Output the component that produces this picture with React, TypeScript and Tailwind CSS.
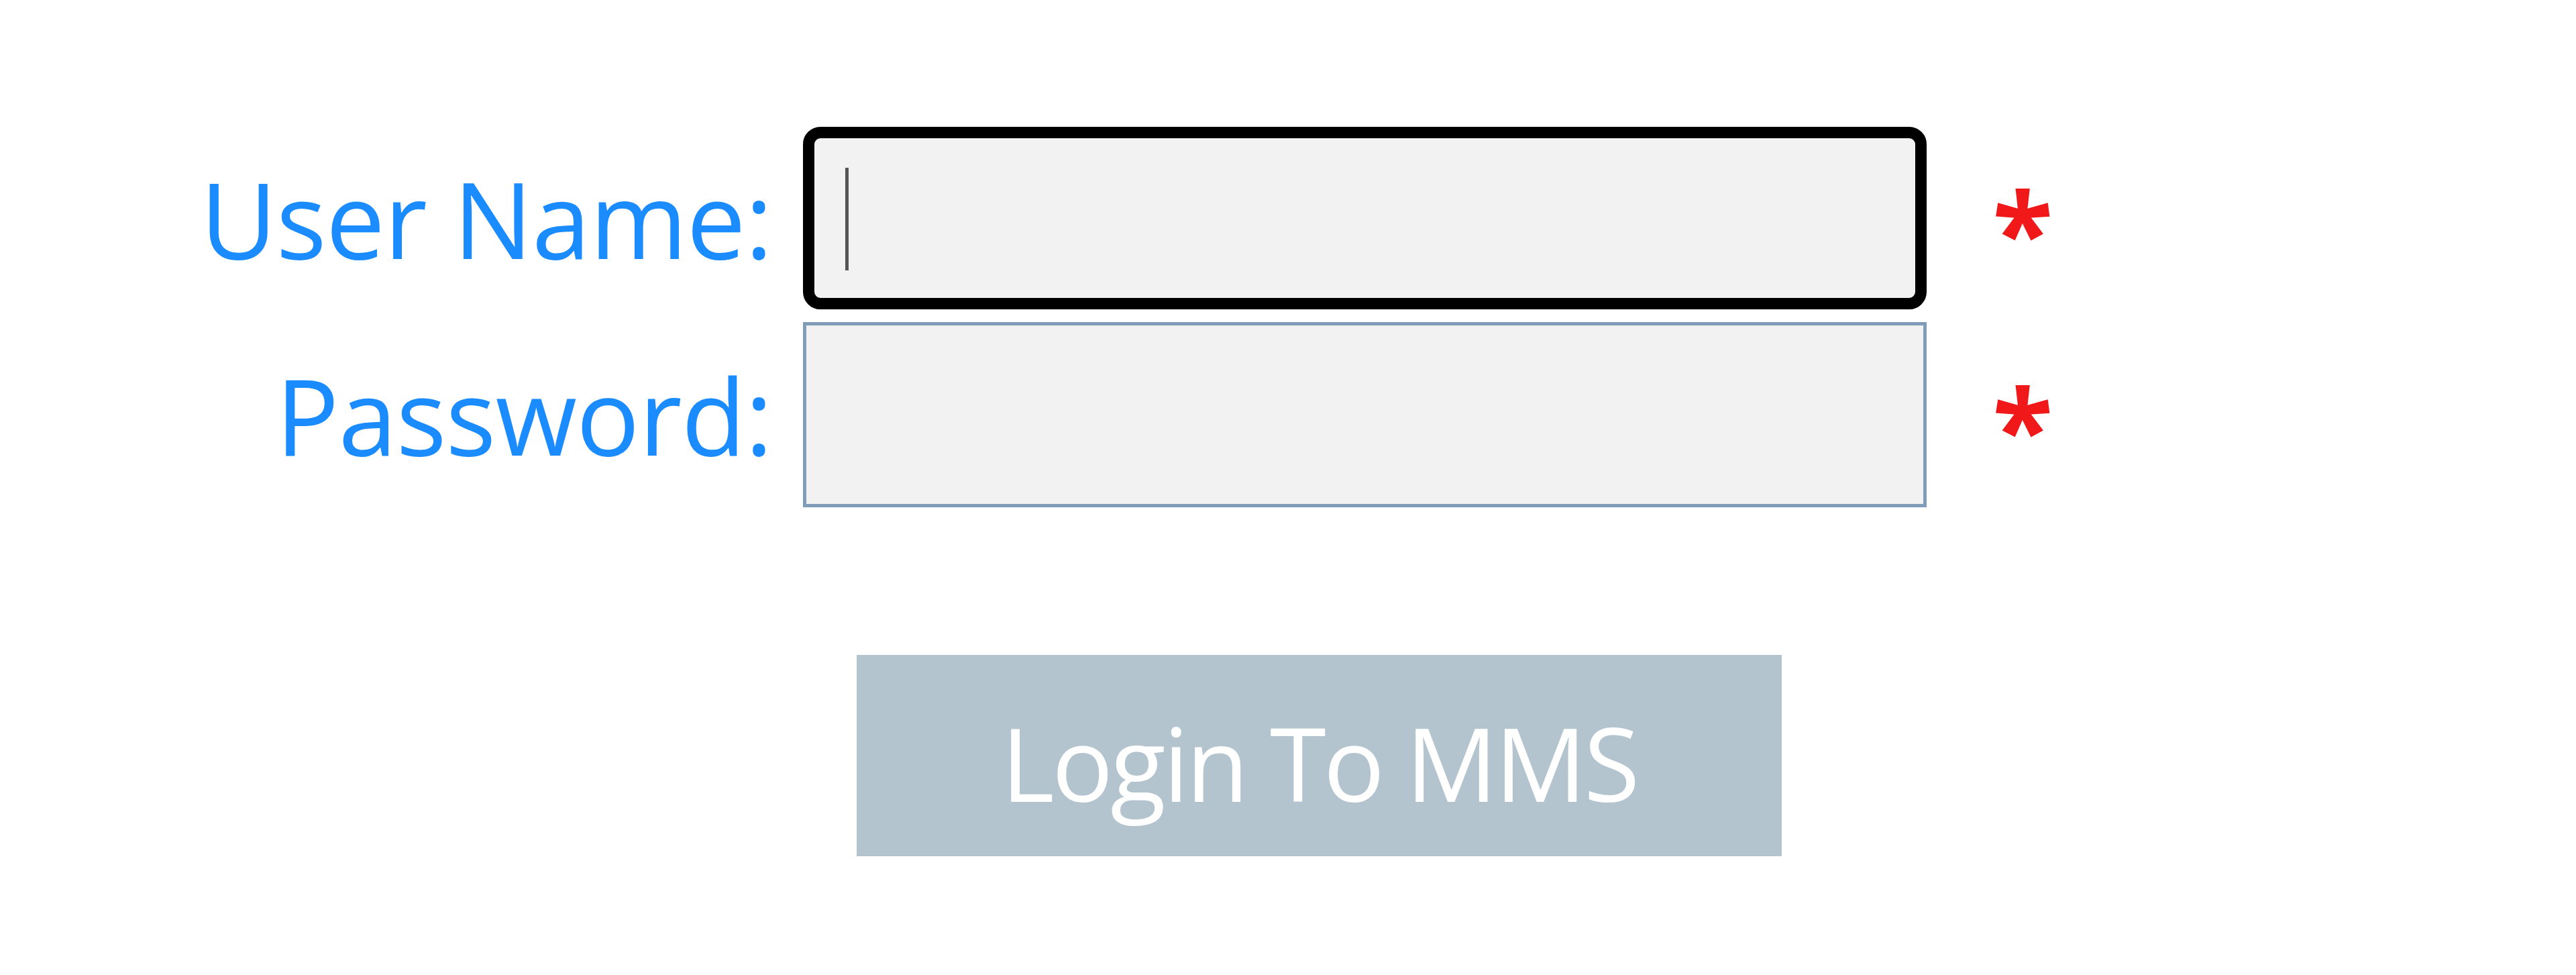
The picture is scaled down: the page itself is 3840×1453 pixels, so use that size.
import React from 'react'

const FONT = { fontFamily: "'Trebuchet MS', 'Open Sans', 'Liberation Sans', sans-serif" }

function Field({ label, focused }: { label: string; focused?: boolean }) {
  return (
    <div className="flex items-center">
      <div className="w-[1151px] text-right text-[157px] leading-none tracking-[-1px] text-[#1a8cff]">{label}</div>
      {focused ? (
        <div className="relative ml-[46px] h-[272px] w-[1675px] rounded-[26px] border-[17px] border-black bg-[#f2f2f3]">
          {/* caret */}
          <div className="absolute left-[46px] top-[44px] h-[153px] w-[5px] bg-[#555]" />
        </div>
      ) : (
        <div className="ml-[46px] h-[276px] w-[1675px] border-[5px] border-[#7f9db9] bg-[#f2f2f2]" />
      )}
      <div className="ml-[98px] pt-[36px] text-[166px] font-bold leading-none text-[#f01818]">*</div>
    </div>
  )
}

export default function App() {
  return (
    <div className="min-h-[1453px] w-[3840px] bg-white pt-[189px]" style={FONT}>
      <div className="flex flex-col gap-[19px]">
        <Field label="User Name:" focused />
        <Field label="Password:" />
      </div>
      <button className="ml-[1277px] mt-[220px] flex h-[300px] w-[1379px] items-center justify-center bg-[#b4c4ce] pt-[22px] text-[152px] leading-none tracking-[-4px] text-white">
        Login To MMS
      </button>
    </div>
  )
}
